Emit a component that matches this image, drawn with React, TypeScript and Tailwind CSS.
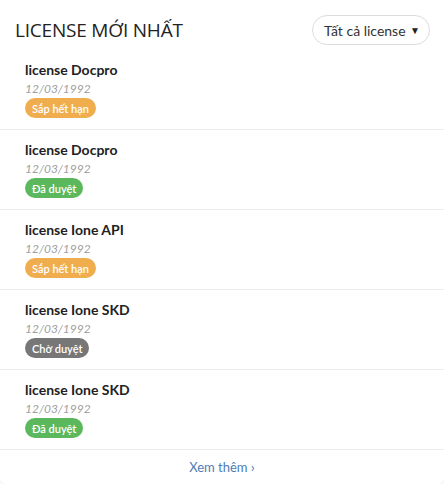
type Status = "expiring" | "approved" | "pending";

type LicenseItem = {
  name: string;
  date: string;
  status: Status;
};

const items: LicenseItem[] = [
  { name: "license Docpro", date: "12/03/1992", status: "expiring" },
  { name: "license Docpro", date: "12/03/1992", status: "approved" },
  { name: "license Ione API", date: "12/03/1992", status: "expiring" },
  { name: "license Ione SKD", date: "12/03/1992", status: "pending" },
  { name: "license Ione SKD", date: "12/03/1992", status: "approved" },
];

const badgeStyles: Record<Status, { label: string; cls: string }> = {
  expiring: { label: "Sắp hết hạn", cls: "bg-[#f0ad4e]" },
  approved: { label: "Đã duyệt", cls: "bg-[#5cb85c]" },
  pending: { label: "Chờ duyệt", cls: "bg-[#777777]" },
};

function StatusBadge({ status }: { status: Status }) {
  const b = badgeStyles[status];
  return (
    <span
      className={`flex h-[20px] w-fit items-center rounded-full px-[7px] text-[11px] font-semibold leading-none text-white ${b.cls}`}
    >
      {b.label}
    </span>
  );
}

export default function App() {
  return (
    <div className="min-h-screen bg-white font-['Lato',sans-serif]">
      <div className="rounded-b-md bg-white shadow-[0_1px_3px_rgba(0,0,0,0.08)]">
        {/* Header */}
        <div className="flex items-center justify-between pl-[15px] pr-[14px] pt-[15px]">
          <h2 className="font-['Open_Sans',sans-serif] text-[19px] font-normal leading-[30px] tracking-[-0.2px] text-[#222]">
            LICENSE MỚI NHẤT
          </h2>
          <button className="flex h-[30px] w-[118px] items-center justify-between rounded-full border border-[#dcdcdc] pl-[11px] pr-[9px] text-[14px] text-[#333]">
            <span>Tất cả license</span>
            <span className="text-[10px] text-[#222]">▼</span>
          </button>
        </div>

        {/* List */}
        <ul>
          {items.map((it, i) => (
            <li
              key={i}
              className={`px-[25px] pb-[11px] ${i === 0 ? "pt-[15px]" : "pt-[10px]"} ${
                i < items.length - 1 ? "border-b border-[#ececec]" : ""
              }`}
            >
              <div className="text-[14px] font-bold leading-[20px] text-[#222]">{it.name}</div>
              <div className="text-[12px] italic leading-[18px] text-[#a0a0a0]">{it.date}</div>
              <StatusBadge status={it.status} />
            </li>
          ))}
        </ul>

        {/* Footer */}
        <div className="flex h-[35px] items-center justify-center border-t border-[#ececec]">
          <a href="#" className="text-[13px] text-[#4f7cb5]">
            Xem thêm <span className="text-[14px]">›</span>
          </a>
        </div>
      </div>
    </div>
  );
}
